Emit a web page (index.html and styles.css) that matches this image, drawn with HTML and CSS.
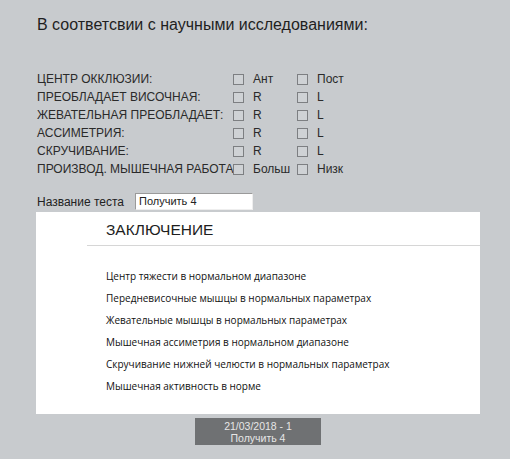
FILE: index.html
```html
<!DOCTYPE html>
<html>
<head>
<meta charset="utf-8">
<link rel="stylesheet" href="styles.css">
</head>
<body>
<div class="page">
  <h1 class="title">В соответсвии с научными исследованиями:</h1>
  <div class="options">
    <div class="lbl">ЦЕНТР ОККЛЮЗИИ:</div>
    <div class="opt"><span class="box"></span><span>Ант</span></div>
    <div class="opt"><span class="box"></span><span>Пост</span></div>
    <div class="lbl">ПРЕОБЛАДАЕТ ВИСОЧНАЯ:</div>
    <div class="opt"><span class="box"></span><span>R</span></div>
    <div class="opt"><span class="box"></span><span>L</span></div>
    <div class="lbl">ЖЕВАТЕЛЬНАЯ ПРЕОБЛАДАЕТ:</div>
    <div class="opt"><span class="box"></span><span>R</span></div>
    <div class="opt"><span class="box"></span><span>L</span></div>
    <div class="lbl">АССИМЕТРИЯ:</div>
    <div class="opt"><span class="box"></span><span>R</span></div>
    <div class="opt"><span class="box"></span><span>L</span></div>
    <div class="lbl">СКРУЧИВАНИЕ:</div>
    <div class="opt"><span class="box"></span><span>R</span></div>
    <div class="opt"><span class="box"></span><span>L</span></div>
    <div class="lbl">ПРОИЗВОД. МЫШЕЧНАЯ РАБОТА</div>
    <div class="opt"><span class="box"></span><span>Больш</span></div>
    <div class="opt"><span class="box"></span><span>Низк</span></div>
  </div>
  <div class="name-row">
    <span class="name-lbl">Название теста</span>
    <span class="name-input">Получить 4</span>
  </div>
  <div class="panel">
    <div class="panel-head">ЗАКЛЮЧЕНИЕ</div>
    <ul class="concl">
      <li>Центр тяжести в нормальном диапазоне</li>
      <li>Передневисочные мышцы в нормальных параметрах</li>
      <li>Жевательные мышцы в нормальных параметрах</li>
      <li>Мышечная ассиметрия в нормальном диапазоне</li>
      <li>Скручивание нижней челюсти в нормальных параметрах</li>
      <li>Мышечная активность в норме</li>
    </ul>
  </div>
  <div class="btn-row">
    <div class="btn">21/03/2018 - 1<br>Получить 4</div>
  </div>
</div>
</body>
</html>
```
FILE: styles.css
```css
html, body {
  margin: 0;
  padding: 0;
}
body {
  background: #c8cbce;
  width: 510px;
  height: 459px;
  overflow: hidden;
  font-family: "Liberation Sans", Arial, sans-serif;
  color: #222;
}
.page {
  padding-top: 13px;
}
.title {
  margin: 0 0 0 37px;
  font-size: 16px;
  font-weight: normal;
  line-height: 24px;
  color: #1f1f1f;
}
.options {
  margin: 33px 0 0 37px;
  display: grid;
  grid-template-columns: 196px 64px auto;
  grid-auto-rows: 18px;
  font-size: 12px;
  color: #2a2a2a;
}
.lbl {
  line-height: 18px;
  white-space: nowrap;
}
.opt {
  display: flex;
  align-items: center;
  gap: 9px;
}
.box {
  width: 9px;
  height: 9px;
  border: 1px solid #7d7f82;
  background: #cfd2d5;
  flex: none;
}
.name-row {
  margin: 15px 0 0 37px;
  display: flex;
  align-items: center;
  height: 17px;
  font-size: 12px;
}
.name-lbl {
  width: 98px;
}
.name-input {
  width: 113px;
  height: 15px;
  background: #fff;
  border: 1px solid #9a9a9a;
  border-right-color: #eee;
  border-bottom-color: #eee;
  font-size: 11px;
  line-height: 15px;
  padding-left: 3px;
}
.panel {
  margin: 2px 0 0 36px;
  width: 444px;
  height: 202px;
  background: #fff;
  box-sizing: border-box;
  padding-top: 8px;
}
.panel-head {
  margin-left: 51px;
  padding-left: 19px;
  font-size: 15.5px;
  line-height: 20px;
  color: #1e1e1e;
  padding-bottom: 5px;
  border-bottom: 1px solid #d6d6d6;
}
.concl {
  list-style: none;
  margin: 19px 0 0 70px;
  padding: 0;
  font-family: "Open Sans", "Noto Sans", sans-serif;
  font-size: 10px;
  color: #111;
}
.concl li {
  line-height: 22px;
}
.btn-row {
  display: flex;
  padding-left: 195px;
  margin-top: 4px;
}
.btn {
  width: 126px;
  height: 27px;
  background: #6f7173;
  color: #e6e6e6;
  font-size: 10.5px;
  line-height: 12px;
  text-align: center;
  box-sizing: border-box;
  padding-top: 2px;
}
```
